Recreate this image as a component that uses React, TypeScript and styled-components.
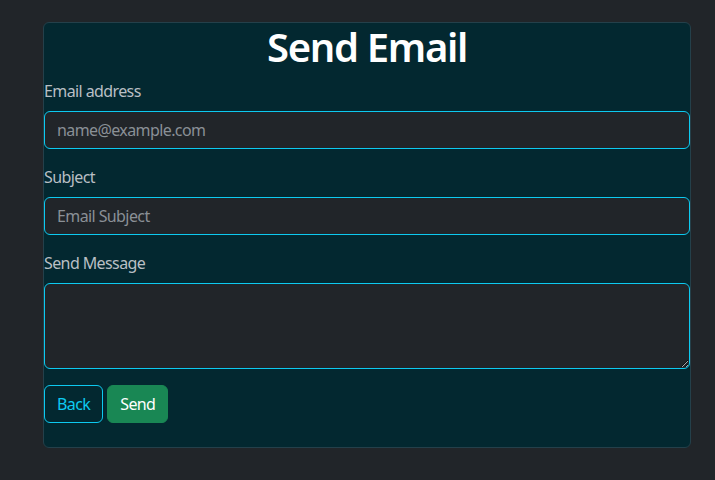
import React from "react";
import styled, { createGlobalStyle } from "styled-components";

const Global = createGlobalStyle`
  html, body { margin: 0; padding: 0; background: #212529; }
  body { font-family: "Noto Sans", "Open Sans", sans-serif; color: #dee2e6; }
  * { box-sizing: border-box; }
`;

const Page = styled.div`
  padding: 22px 24px 0 43px;
  width: 715px;
`;

const Card = styled.div`
  width: 648px;
  background: #032830;
  border: 1px solid #24404a;
  border-radius: 6px;
  padding: 0 0 24px 0;
`;

const Title = styled.h1`
  margin: 0 0 8px 0;
  text-align: center;
  font-size: 40px;
  line-height: 48px;
  font-weight: 600;
  letter-spacing: -1.3px;
  color: #ffffff;
`;

const Field = styled.div`
  margin-bottom: 16px;
`;

const Label = styled.label`
  display: block;
  font-size: 16px;
  line-height: 24px;
  margin-bottom: 8px;
  letter-spacing: -0.6px;
  color: #b9bfc4;
`;

const inputBase = `
  display: block;
  width: 100%;
  background: #212529;
  border: 1px solid #0dcaf0;
  border-radius: 6px;
  padding: 6px 12px;
  font-family: "Noto Sans", "Open Sans", sans-serif;
  font-size: 16px;
  line-height: 24px;
  letter-spacing: -0.6px;
  color: #dee2e6;
  outline: none;
  &::placeholder { color: #8a9096; }
`;

const Input = styled.input`
  ${inputBase}
  height: 38px;
`;

const TextArea = styled.textarea`
  ${inputBase}
  height: 86px;
  resize: vertical;
`;

const Actions = styled.div`
  display: flex;
  gap: 4px;
`;

const Button = styled.button<{ $variant: "outline" | "success" }>`
  font-family: "Noto Sans", "Open Sans", sans-serif;
  font-size: 16px;
  line-height: 24px;
  letter-spacing: -0.6px;
  padding: 6px 12px;
  border-radius: 6px;
  height: 38px;
  cursor: pointer;
  border: 1px solid ${(p) => (p.$variant === "outline" ? "#0dcaf0" : "#198754")};
  background: ${(p) => (p.$variant === "outline" ? "transparent" : "#198754")};
  color: ${(p) => (p.$variant === "outline" ? "#0dcaf0" : "#ffffff")};
`;

export default function App() {
  return (
    <>
      <Global />
      <Page>
        <Card>
          <Title>Send Email</Title>
          <Field>
            <Label>Email address</Label>
            <Input placeholder="name@example.com" />
          </Field>
          <Field>
            <Label>Subject</Label>
            <Input placeholder="Email Subject" />
          </Field>
          <Field>
            <Label>Send Message</Label>
            <TextArea />
          </Field>
          <Actions>
            <Button $variant="outline">Back</Button>
            <Button $variant="success">Send</Button>
          </Actions>
        </Card>
      </Page>
    </>
  );
}
